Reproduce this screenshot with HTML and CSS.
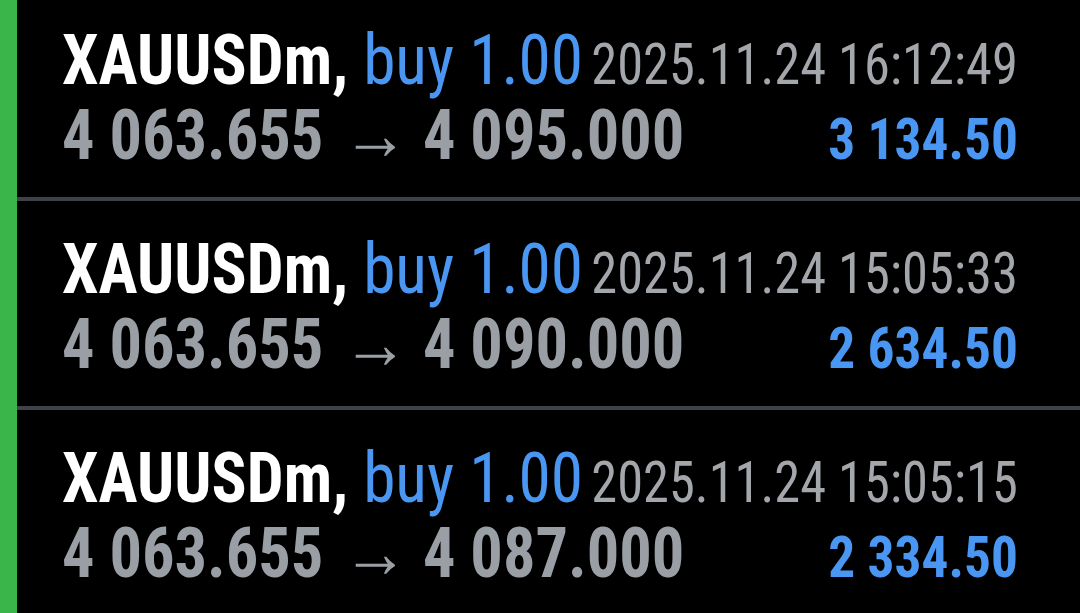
FILE: index.html
```html
<!DOCTYPE html>
<html lang="en">

<head>
    <meta charset="UTF-8">
    <meta name="viewport" content="width=device-width, initial-scale=1.0">
    <title>History</title>
    <link rel="stylesheet" href="styles.css">
</head>

<body>
    <div class="screen">
        <!-- left marker -->
        <div class="marker"></div>

        <ul class="deals">
            <li class="deal">
                <div class="line">
                    <span class="head"><b class="symbol">XAUUSDm,</b> <span class="type">buy 1.00</span></span>
                    <span class="time">2025.11.24 16:12:49</span>
                </div>
                <div class="line">
                    <span class="prices">4 063.655 <i class="arrow">→</i> 4 095.000</span>
                    <span class="profit">3 134.50</span>
                </div>
            </li>
            <li class="deal">
                <div class="line">
                    <span class="head"><b class="symbol">XAUUSDm,</b> <span class="type">buy 1.00</span></span>
                    <span class="time">2025.11.24 15:05:33</span>
                </div>
                <div class="line">
                    <span class="prices">4 063.655 <i class="arrow">→</i> 4 090.000</span>
                    <span class="profit">2 634.50</span>
                </div>
            </li>
            <li class="deal">
                <div class="line">
                    <span class="head"><b class="symbol">XAUUSDm,</b> <span class="type">buy 1.00</span></span>
                    <span class="time">2025.11.24 15:05:15</span>
                </div>
                <div class="line">
                    <span class="prices">4 063.655 <i class="arrow">→</i> 4 087.000</span>
                    <span class="profit">2 334.50</span>
                </div>
            </li>
        </ul>
    </div>
</body>

</html>
```

FILE: styles.css
```css
html,
body,
ul,
li {
    margin: 0;
    padding: 0;
    border: 0;
}

body {
    background-color: #000;
    font-family: Roboto, "Liberation Sans", sans-serif;
    font-stretch: 75%;
    overflow: hidden;
}

.screen {
    display: flex;
    height: 613px;
    overflow: hidden;
}

.marker {
    width: 17px;
    flex: none;
    background-color: #3ab54a;
}

.deals {
    flex: 1;
    list-style: none;
    margin-top: -8px;
}

.deal {
    height: 209px;
    padding: 30px 0 0 45px;
    box-sizing: border-box;
    border-bottom: 4px solid #3f4247;
    white-space: nowrap;
}

/* condensed face, squeezed a bit more like the app */
.line {
    display: flex;
    justify-content: space-between;
    align-items: baseline;
    width: 1039px;
    height: 75px;
    line-height: 75px;
    font-size: 70px;
    transform: scaleX(.92);
    transform-origin: 0 0;
}

.head {
    font-size: 71px;
}

.symbol {
    font-weight: 700;
    color: #fff;
}

.type {
    color: #4a97f3;
}

.time {
    font-size: 57px;
    color: #a3a6aa;
}

.prices {
    font-weight: 700;
    color: #9a9ea5;
}

.arrow {
    font-style: normal;
    font-weight: 400;
    font-size: 72px;
    margin-left: 4px;
}

.profit {
    font-size: 58px;
    font-weight: 700;
    color: #4a97f3;
}
```
